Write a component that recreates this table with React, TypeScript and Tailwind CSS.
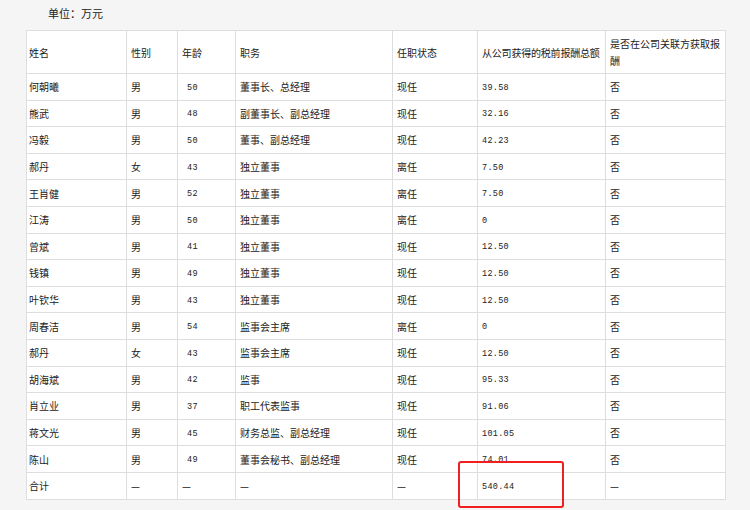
import React from 'react';

type Row = {
  name: string;
  sex: string;
  age: string;
  title: string;
  status: string;
  pay: string;
  related: string;
};

const rows: Row[] = [
  { name: '何朝曦', sex: '男', age: '50', title: '董事长、总经理', status: '现任', pay: '39.58', related: '否' },
  { name: '熊武', sex: '男', age: '48', title: '副董事长、副总经理', status: '现任', pay: '32.16', related: '否' },
  { name: '冯毅', sex: '男', age: '50', title: '董事、副总经理', status: '现任', pay: '42.23', related: '否' },
  { name: '郝丹', sex: '女', age: '43', title: '独立董事', status: '离任', pay: '7.50', related: '否' },
  { name: '王肖健', sex: '男', age: '52', title: '独立董事', status: '离任', pay: '7.50', related: '否' },
  { name: '江涛', sex: '男', age: '50', title: '独立董事', status: '离任', pay: '0', related: '否' },
  { name: '曾斌', sex: '男', age: '41', title: '独立董事', status: '现任', pay: '12.50', related: '否' },
  { name: '钱镇', sex: '男', age: '49', title: '独立董事', status: '现任', pay: '12.50', related: '否' },
  { name: '叶钦华', sex: '男', age: '43', title: '独立董事', status: '现任', pay: '12.50', related: '否' },
  { name: '周春洁', sex: '男', age: '54', title: '监事会主席', status: '离任', pay: '0', related: '否' },
  { name: '郝丹', sex: '女', age: '43', title: '监事会主席', status: '现任', pay: '12.50', related: '否' },
  { name: '胡海斌', sex: '男', age: '42', title: '监事', status: '现任', pay: '95.33', related: '否' },
  { name: '肖立业', sex: '男', age: '37', title: '职工代表监事', status: '现任', pay: '91.06', related: '否' },
  { name: '蒋文光', sex: '男', age: '45', title: '财务总监、副总经理', status: '现任', pay: '101.05', related: '否' },
  { name: '陈山', sex: '男', age: '49', title: '董事会秘书、副总经理', status: '现任', pay: '74.01', related: '否' },
  { name: '合计', sex: '—', age: '—', title: '—', status: '—', pay: '540.44', related: '—' },
];

const cjk = "font-['Noto_Sans_CJK_SC','DejaVu_Sans',sans-serif]";
const num = "font-['Liberation_Mono','Noto_Sans_CJK_SC',monospace] text-[8.5px] tracking-[0.3px]";
const cell = 'border border-[#dedede] px-[4px] py-0 text-left align-middle font-normal';

const isNum = (s: string) => /^[0-9.]+$/.test(s);

export default function App() {
  return (
    <div className={`w-[750px] h-[510px] bg-[#f5f5f5] text-[#222] overflow-hidden ${cjk}`}>
      <div className="pl-[48px] pt-[6px] h-[30px] text-[11px] leading-[14px]">单位：万元</div>
      <div className="relative pl-[26px]">
        <table className="w-[699px] table-fixed border-collapse bg-white text-[10px] leading-[17px]">
          <colgroup>
            <col className="w-[100px]" />
            <col className="w-[51px]" />
            <col className="w-[58px]" />
            <col className="w-[157px]" />
            <col className="w-[85px]" />
            <col className="w-[128px]" />
            <col className="w-[120px]" />
          </colgroup>
          <thead>
            <tr className="h-[43px]">
              <th className={`${cell} pl-[2px]`}>姓名</th>
              <th className={cell}>性别</th>
              <th className={cell}>年龄</th>
              <th className={cell}>职务</th>
              <th className={cell}>任职状态</th>
              <th className={`${cell} whitespace-nowrap tracking-[-0.2px]`}>从公司获得的税前报酬总额</th>
              <th className={cell}>是否在公司关联方获取报酬</th>
            </tr>
          </thead>
          <tbody>
            {rows.map((r, i) => (
              <tr key={i} className="h-[26.6px]">
                <td className={`${cell} pl-[2px]`}>{r.name}</td>
                <td className={cell}>{r.sex}</td>
                <td className={cell}>
                  {isNum(r.age) ? <span className={`${num} pl-[5px]`}>{r.age}</span> : r.age}
                </td>
                <td className={cell}>{r.title}</td>
                <td className={cell}>{r.status}</td>
                <td className={cell}>
                  <span className={num}>{r.pay}</span>
                </td>
                <td className={cell}>{r.related}</td>
              </tr>
            ))}
          </tbody>
        </table>
        <div className="absolute left-[458px] top-[431px] w-[106px] h-[47px] border-2 border-[#f02020] rounded-[3px]" />
      </div>
    </div>
  );
}
